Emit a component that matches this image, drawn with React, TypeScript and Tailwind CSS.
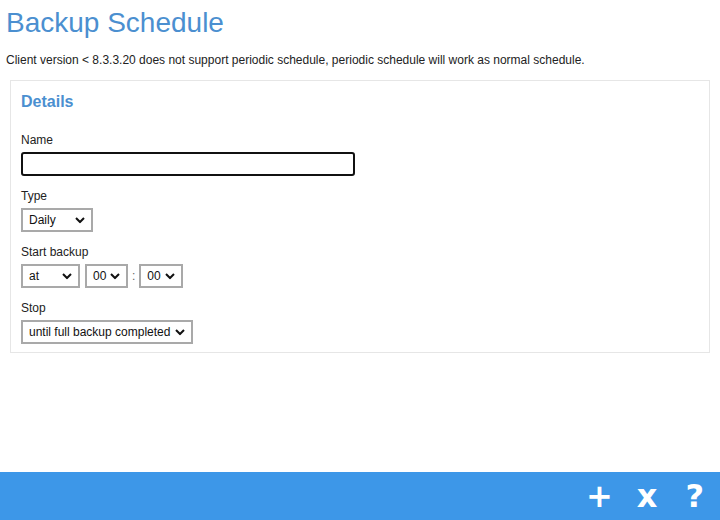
import React from "react";

function Chevron() {
  return (
    <svg width="10" height="7" viewBox="0 0 10 7" className="pointer-events-none absolute right-[6px] top-1/2 -translate-y-1/2">
      <path d="M1 1.5 L5 5.5 L9 1.5" fill="none" stroke="#111" strokeWidth="2" />
    </svg>
  );
}

function Select({ value, width }: { value: string; width: string }) {
  return (
    <div className={`relative h-[24px] border-2 border-[#a9a9a9] bg-white ${width}`}>
      <div className="pl-[6px] text-[12px] leading-[20px] text-[#111]">{value}</div>
      <Chevron />
    </div>
  );
}

export default function App() {
  return (
    <div className="flex h-[520px] w-[720px] flex-col bg-white font-['Liberation_Sans',Arial,sans-serif] text-[#222]">
      <div className="flex-1">
        {/* Header */}
        <h1 className="pl-[6px] pt-[5px] text-[28px] leading-[36px] text-[#4b8fd0]">Backup Schedule</h1>
        <p className="pl-[6px] pt-[12px] text-[12px] leading-[14px]">
          Client version &lt; 8.3.3.20 does not support periodic schedule, periodic schedule will work as normal schedule.
        </p>

        {/* Details panel */}
        <div className="mx-[10px] mt-[13px] h-[273px] border border-[#e6e6e6] px-[10px] pt-[11px]">
          <h2 className="text-[16px] font-bold leading-[20px] text-[#4b8fd0]">Details</h2>

          <div className="mt-[21px] text-[12px] leading-[14px]">Name</div>
          <div className="mt-[5px] h-[24px] w-[334px] rounded-[3px] border-2 border-[#111]" />

          <div className="mt-[13px] text-[12px] leading-[14px]">Type</div>
          <div className="mt-[5px]">
            <Select value="Daily" width="w-[72px]" />
          </div>

          <div className="mt-[13px] text-[12px] leading-[14px]">Start backup</div>
          <div className="mt-[5px] flex items-center">
            <Select value="at" width="w-[59px]" />
            <div className="ml-[5px]">
              <Select value="00" width="w-[43px]" />
            </div>
            <span className="mx-[4px] text-[12px] text-[#666]">:</span>
            <Select value="00" width="w-[44px]" />
          </div>

          <div className="mt-[13px] text-[12px] leading-[14px]">Stop</div>
          <div className="mt-[5px]">
            <Select value="until full backup completed" width="w-[172px]" />
          </div>
        </div>
      </div>

      {/* Bottom toolbar */}
      <div className="flex h-[48px] items-center justify-end bg-[#3d97e8] pr-[16px] font-['DejaVu_Sans',sans-serif] text-[32px] font-bold text-white">
        <span className="leading-none">+</span>
        <span className="ml-[24px] leading-none">x</span>
        <span className="ml-[28px] leading-none">?</span>
      </div>
    </div>
  );
}
